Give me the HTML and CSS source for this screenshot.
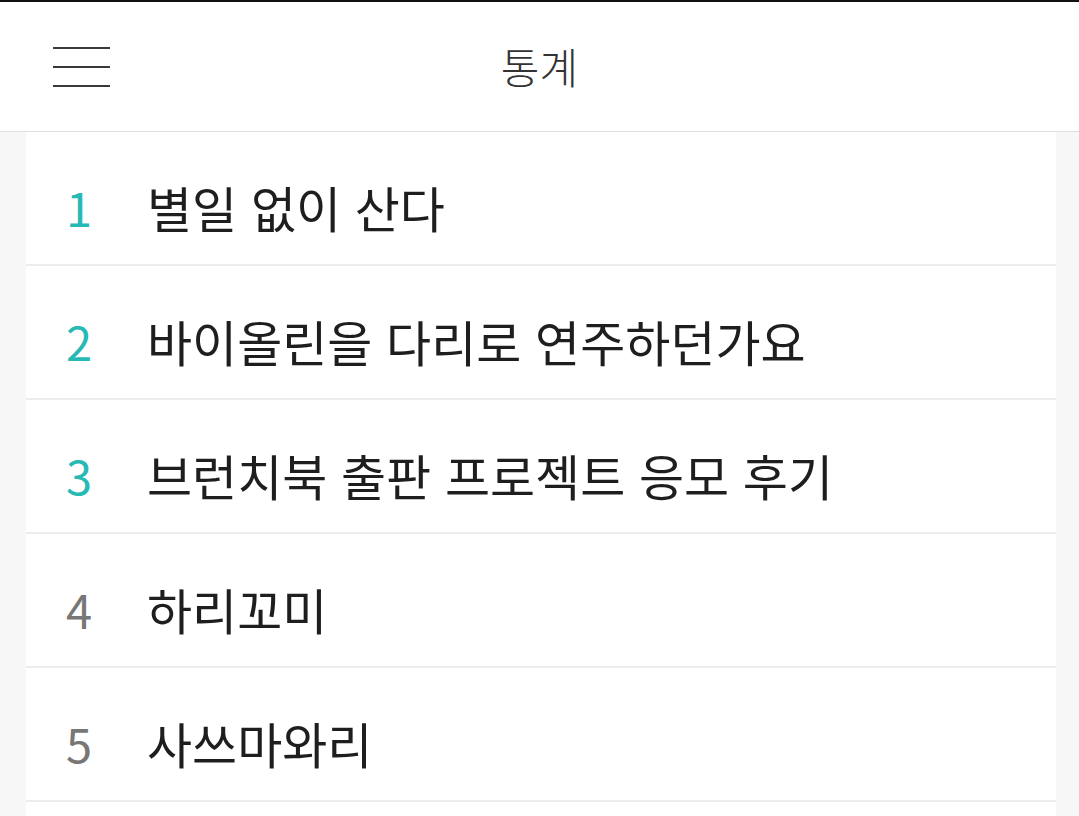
FILE: index.html
```html
<!DOCTYPE html>
<html lang="ko">
<head>
<meta charset="utf-8">
<title>통계</title>
<link rel="stylesheet" href="styles.css">
</head>
<body>
<header class="topbar">
  <button class="menu" aria-label="메뉴">
    <span class="bar"></span><span class="bar"></span><span class="bar"></span>
  </button>
  <h1 class="title">통계</h1>
</header>
<main class="page">
  <ol class="list">
    <li class="row"><span class="rank top">1</span><span class="name">별일 없이 산다</span></li>
    <li class="row"><span class="rank top">2</span><span class="name">바이올린을 다리로 연주하던가요</span></li>
    <li class="row"><span class="rank top">3</span><span class="name">브런치북 출판 프로젝트 응모 후기</span></li>
    <li class="row"><span class="rank">4</span><span class="name">하리꼬미</span></li>
    <li class="row"><span class="rank">5</span><span class="name">사쓰마와리</span></li>
  </ol>
</main>
</body>
</html>
```

FILE: styles.css
```css
* { box-sizing: border-box; }
html, body { margin: 0; padding: 0; }
body {
  background: #f7f7f7;
  font-family: "Noto Sans CJK KR", "Noto Sans", sans-serif;
  color: #222;
  height: 816px;
  overflow: hidden;
  border-top: 2px solid #111;
}
.topbar {
  height: 130px;
  background: #fff;
  border-bottom: 1px solid #dedede;
  display: flex;
  align-items: center;
  justify-content: center;
  position: relative;
}
.menu {
  position: absolute;
  left: 53px;
  top: 45px;
  width: 57px;
  height: 40px;
  padding: 0;
  border: 0;
  background: none;
  display: flex;
  flex-direction: column;
  justify-content: space-between;
}
.bar {
  display: block;
  width: 57px;
  height: 2px;
  background: #3a3a3a;
}
.title {
  margin: 0;
  font-size: 42px;
  font-weight: 300;
  color: #333;
  line-height: 1;
  padding-bottom: 2px;
}
.page {
  padding: 0 23px 0 26px;
}
.list {
  list-style: none;
  margin: 0;
  padding: 0 0 40px;
  background: #fff;
}
.row {
  height: 134px;
  border-bottom: 2px solid #ececec;
  display: flex;
  align-items: center;
  padding: 16px 0 0 40px;
}
.rank {
  width: 81px;
  font-size: 47px;
  font-weight: 400;
  color: #777;
  line-height: 1;
}
.rank.top { color: #27bab4; }
.name {
  font-size: 49px;
  font-weight: 400;
  color: #1e1e1e;
  line-height: 1;
}
```
